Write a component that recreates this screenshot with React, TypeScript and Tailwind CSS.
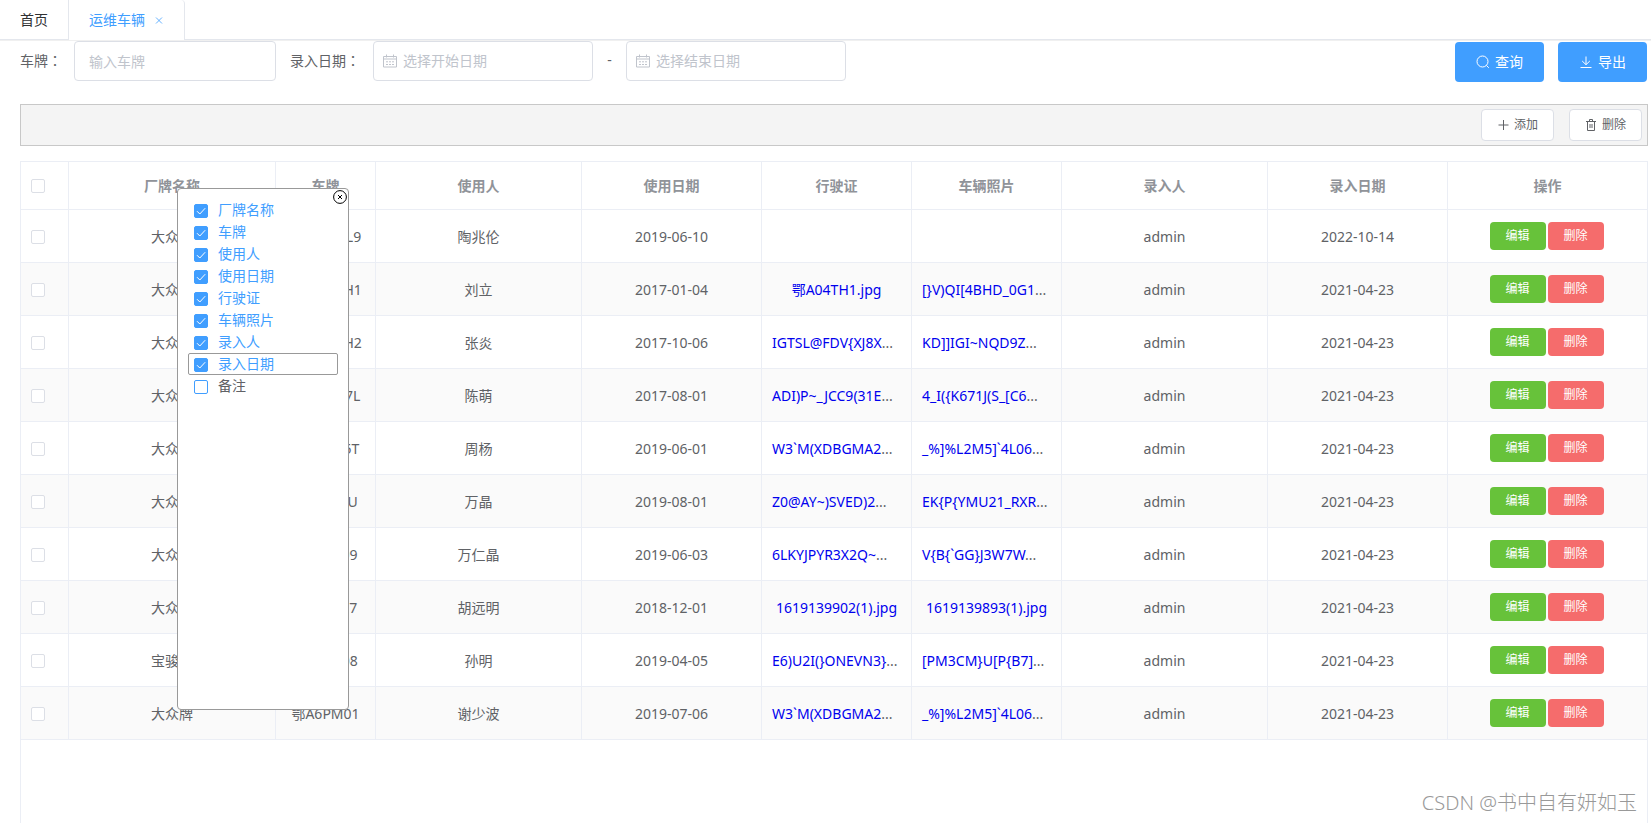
import React, { useState } from 'react';

interface Vehicle {
    brand: string;
    plate: string;
    user: string;
    useDate: string;
    license: string;
    photo: string;
    entryDate: string;
}

const vehicles: Vehicle[] = [
    { brand: '大众牌', plate: '鄂ADMUL9', user: '陶兆伦', useDate: '2019-06-10', license: '', photo: '', entryDate: '2022-10-14' },
    { brand: '大众牌', plate: '鄂A0NMH1', user: '刘立', useDate: '2017-01-04', license: '鄂A04TH1.jpg', photo: '[}V)QI[4BHD_0G1...', entryDate: '2021-04-23' },
    { brand: '大众牌', plate: '鄂A6NMH2', user: '张炎', useDate: '2017-10-06', license: 'IGTSL@FDV{XJ8X...', photo: 'KD]]IGI~NQD9Z...', entryDate: '2021-04-23' },
    { brand: '大众牌', plate: '鄂A8MN7L', user: '陈萌', useDate: '2017-08-01', license: 'ADI)P~_JCC9(31E...', photo: '4_I({K671J(S_[C6...', entryDate: '2021-04-23' },
    { brand: '大众牌', plate: '鄂A2M65T', user: '周杨', useDate: '2019-06-01', license: 'W3`M(XDBGMA2...', photo: '_%]%L2M5]`4L06...', entryDate: '2021-04-23' },
    { brand: '大众牌', plate: '鄂A7L52U', user: '万晶', useDate: '2019-08-01', license: 'Z0@AY~)SVED)2...', photo: 'EK{P{YMU21_RXR...', entryDate: '2021-04-23' },
    { brand: '大众牌', plate: '鄂A3PK09', user: '万仁晶', useDate: '2019-06-03', license: '6LKYJPYR3X2Q~...', photo: 'V{B{`GG}J3W7W...', entryDate: '2021-04-23' },
    { brand: '大众牌', plate: '鄂A9P017', user: '胡远明', useDate: '2018-12-01', license: '1619139902(1).jpg', photo: '1619139893(1).jpg', entryDate: '2021-04-23' },
    { brand: '宝骏牌', plate: '鄂A5RC08', user: '孙明', useDate: '2019-04-05', license: 'E6)U2I(}ONEVN3}...', photo: '[PM3CM}U[P{B7]...', entryDate: '2021-04-23' },
    { brand: '大众牌', plate: '鄂A6PM01', user: '谢少波', useDate: '2019-07-06', license: 'W3`M(XDBGMA2...', photo: '_%]%L2M5]`4L06...', entryDate: '2021-04-23' },
];

const columns = [
    { title: '厂牌名称', width: 'w-[207px]' },
    { title: '车牌', width: 'w-[100px]' },
    { title: '使用人', width: '' },
    { title: '使用日期', width: 'w-[180px]' },
    { title: '行驶证', width: 'w-[150px]' },
    { title: '车辆照片', width: 'w-[150px]' },
    { title: '录入人', width: '' },
    { title: '录入日期', width: 'w-[180px]' },
    { title: '操作', width: 'w-[199px]' },
];

const fields = ['厂牌名称', '车牌', '使用人', '使用日期', '行驶证', '车辆照片', '录入人', '录入日期', '备注'];

const CalendarIcon = () => (
    <svg className="w-3.5 h-3.5 shrink-0" viewBox="0 0 14 14" fill="none" stroke="currentColor" aria-hidden="true">
        <path d="M.5 2.5h13v10.5H.5zM.5 5h13M3.5.5v3M10.5.5v3M3 7.8h2M6 7.8h2M9 7.8h2M3 10.5h2M6 10.5h2M9 10.5h2" />
    </svg>
);

const SearchIcon = () => (
    <svg className="w-3.5 h-3.5" viewBox="0 0 14 14" fill="none" stroke="currentColor" aria-hidden="true">
        <circle cx="6.5" cy="6.5" r="5.5" />
        <path d="M10.4 10.4l2.4 2.4" />
    </svg>
);

const DownloadIcon = () => (
    <svg className="w-3.5 h-3.5" viewBox="0 0 14 14" fill="none" stroke="currentColor" aria-hidden="true">
        <path d="M7 1.5v8M3.2 6L7 9.7 10.8 6M1.5 12.5h11" />
    </svg>
);

const PlusIcon = () => (
    <svg className="w-3 h-3" viewBox="0 0 12 12" fill="none" stroke="currentColor" aria-hidden="true">
        <path d="M6.5 1v10M1.5 6h10" />
    </svg>
);

const TrashIcon = () => (
    <svg className="w-3 h-3" viewBox="0 0 12 12" fill="none" stroke="currentColor" aria-hidden="true">
        <path d="M1 2.5h10M2.5 2.5v9h7v-9M4.5 2.5v-2h3v2M5 5v4M7 5v4" />
    </svg>
);

interface CheckProps {
    label?: string;
    checked?: boolean;
    accent?: boolean;
    onChange?: () => void;
}

const Check = ({ label, checked, accent, onChange }: CheckProps) => (
    <span className={`relative block w-3.5 h-3.5 shrink-0 ${accent ? 'mt-0.5' : ''}`}>
        <input
            type="checkbox"
            aria-label={label}
            checked={checked}
            onChange={onChange}
            className={`peer appearance-none block w-3.5 h-3.5 rounded-xs border bg-white checked:bg-[#409eff] checked:border-[#409eff] ${accent ? 'border-[#409eff]' : 'border-[#dcdfe6]'}`}
        />
        <svg className="absolute inset-0 w-3.5 h-3.5 pointer-events-none invisible peer-checked:visible" viewBox="0 0 14 14" fill="none" stroke="#fff" aria-hidden="true">
            <path d="M3 7.2l2.8 2.8 5.4-5.8" />
        </svg>
    </span>
);

// the full-width colon sits in the middle of its box in the TC face
const Colon = () => <span className="font-['Noto_Sans_CJK_TC',sans-serif]">：</span>;

const DateBox = ({ label, placeholder }: { label: string; placeholder: string }) => (
    <label className="flex items-center gap-1.5 w-[220px] h-10 px-[9px] rounded-sm border border-[#dcdfe6] bg-white text-[#c0c4cc]">
        <CalendarIcon />
        <input type="text" aria-label={label} placeholder={placeholder} className="w-full min-w-0 outline-none text-[#606266] placeholder:text-[#c0c4cc]" />
    </label>
);

// long file names start at the cell padding, with the dots in the cell's own colour
const FileCell = ({ name }: { name: string }) => {
    const cut = name.endsWith('...');
    return (
        <td className={`px-2.5 whitespace-nowrap ${cut ? 'text-left' : ''}`}>
            {name && <a href="#file" className="text-[#0000ee]">{cut ? name.slice(0, -3) : name}</a>}
            {cut && '...'}
        </td>
    );
};

const App = () => {
    const [shown, setShown] = useState<string[]>(fields.slice(0, 8));
    const [open, setOpen] = useState(true);
    const [selected, setSelected] = useState<number[]>([]);

    const toggleField = (name: string) => {
        setShown(shown.includes(name) ? shown.filter((f) => f !== name) : [...shown, name]);
    };

    const toggleRow = (index: number) => {
        setSelected(selected.includes(index) ? selected.filter((i) => i !== index) : [...selected, index]);
    };

    return (
        <div className="flex flex-col h-screen overflow-hidden bg-white text-sm text-[#606266] font-['Noto_Sans','Noto_Sans_CJK_SC',sans-serif]">
            <nav className="flex h-10 shrink-0 border-b border-[#e4e7ed] shadow-[0_1px_0_#f0f0f0]">
                <a href="#home" className="flex items-center px-5 h-10 rounded-tl-sm border-r border-[#e4e7ed] text-[#303133]">首页</a>
                <div className="flex items-center gap-[9px] h-10 px-5 rounded-tr-sm border-r border-[#e4e7ed] bg-white text-[#409eff]">
                    <a href="#vehicles">运维车辆</a>
                    <button type="button" aria-label="关闭">
                        <svg className="w-2.5 h-2.5" viewBox="0 0 10 10" fill="none" stroke="currentColor" strokeWidth="0.8">
                            <path d="M2 2.5l6 6M8 2.5l-6 6" />
                        </svg>
                    </button>
                </div>
            </nav>

            <main className="relative flex flex-col flex-1 min-h-0 pl-5 pr-[3px] pt-px">
                <form className="flex items-start leading-[38px]" onSubmit={(e) => e.preventDefault()}>
                    <label htmlFor="plate" className="w-[54px]">车牌<Colon /></label>
                    <input id="plate" type="text" placeholder="输入车牌" className="w-[202px] h-10 px-3.5 rounded-sm border border-[#dcdfe6] outline-none placeholder:text-[#c0c4cc]" />
                    <span className="w-[83px] ml-3.5">录入日期<Colon /></span>
                    <DateBox label="开始日期" placeholder="选择开始日期" />
                    <span className="w-[33px] text-center">-</span>
                    <DateBox label="结束日期" placeholder="选择结束日期" />
                    <div className="flex gap-3.5 ml-auto pt-px pr-px">
                        <button type="submit" className="flex items-center justify-center gap-[5px] w-[89px] h-10 rounded-sm bg-[#409eff] text-white"><SearchIcon />查询</button>
                        <button type="button" className="flex items-center justify-center gap-[5px] w-[89px] h-10 rounded-sm bg-[#409eff] text-white"><DownloadIcon />导出</button>
                    </div>
                </form>

                <div className="flex items-center justify-end gap-[15px] h-[42px] shrink-0 mt-[22px] pr-[5px] border border-[#c8c8c8] bg-[#f4f4f4] text-xs">
                    <button type="button" className="flex items-center justify-center gap-[5px] w-[73px] h-8 rounded-sm border border-[#dcdfe6] bg-white"><PlusIcon />添加</button>
                    <button type="button" className="flex items-center justify-center gap-[5px] w-[73px] h-8 rounded-sm border border-[#dcdfe6] bg-white"><TrashIcon />删除</button>
                </div>

                <div className="flex-1 min-h-0 mt-[15px] border border-b-0 border-[#ebeef5]">
                    <table className="w-full table-fixed border-separate border-spacing-0 text-center">
                        <thead>
                            <tr className="text-[#909399]">
                                <th className="w-12 h-12 pl-2.5 border-r border-b border-[#ebeef5]"><Check label="全选" /></th>
                                {columns.map((col) => (
                                    <th key={col.title} className={`h-12 border-r border-b border-[#ebeef5] last:border-r-0 font-bold ${col.width}`}>{col.title}</th>
                                ))}
                            </tr>
                        </thead>
                        <tbody className="[&_td]:h-[53px] [&_td]:pt-0.5 [&_td]:border-r [&_td]:border-b [&_td]:border-[#ebeef5] [&_td:last-child]:border-r-0 [&_td:last-child]:pt-0">
                            {vehicles.map((v, i) => (
                                <tr key={i} className="even:bg-[#fafafa]">
                                    <td className="pl-2.5"><Check label={v.plate} checked={selected.includes(i)} onChange={() => toggleRow(i)} /></td>
                                    <td>{v.brand}</td>
                                    <td>{v.plate}</td>
                                    <td>{v.user}</td>
                                    <td>{v.useDate}</td>
                                    <FileCell name={v.license} />
                                    <FileCell name={v.photo} />
                                    <td>admin</td>
                                    <td>{v.entryDate}</td>
                                    <td className="pr-0.5">
                                        <div className="flex justify-center gap-0.5 text-xs text-white">
                                            <button type="button" className="w-14 h-7 rounded-sm bg-[#67c23a]">编辑</button>
                                            <button type="button" className="w-14 h-7 rounded-sm bg-[#f56c6c]">删除</button>
                                        </div>
                                    </td>
                                </tr>
                            ))}
                        </tbody>
                    </table>
                </div>

                {open && (
                    <div className="absolute left-[177px] top-[148px] w-[172px] h-[522px] p-2.5 rounded-sm border border-[#999] bg-white">
                        <button type="button" aria-label="关闭" onClick={() => setOpen(false)} className="absolute right-px top-px text-black">
                            <svg className="w-3.5 h-3.5" viewBox="0 0 14 14" fill="none" stroke="currentColor">
                                <circle cx="7" cy="7" r="6.4" />
                                <path d="M5 5l4 4M9 5l-4 4" />
                            </svg>
                        </button>
                        {fields.map((name) => (
                            <label key={name} className={`flex items-center gap-2.5 h-[22px] px-[5px] rounded-xs border ${name === '录入日期' ? 'border-[#999]' : 'border-transparent'} ${shown.includes(name) ? 'text-[#409eff]' : ''}`}>
                                <Check accent checked={shown.includes(name)} onChange={() => toggleField(name)} />
                                {name}
                            </label>
                        ))}
                    </div>
                )}

                <p className="absolute right-3.5 bottom-1.5 text-xl font-light text-[#999] whitespace-nowrap">CSDN @书中自有妍如玉</p>
            </main>
        </div>
    );
};

export default App;
